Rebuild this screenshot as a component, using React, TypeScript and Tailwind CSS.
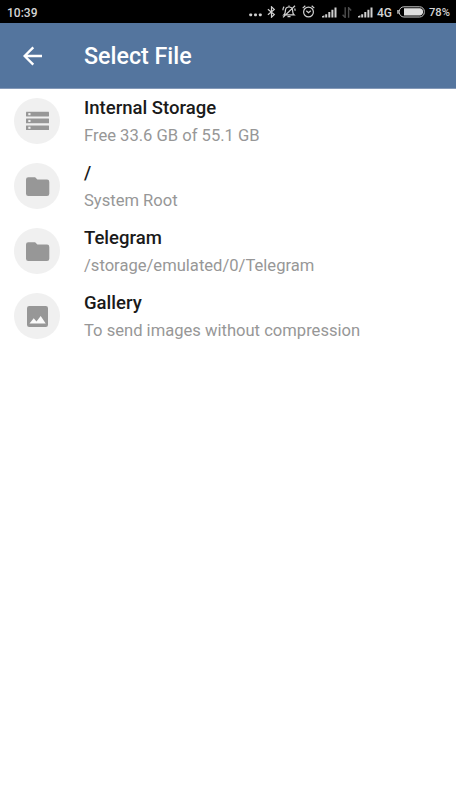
import type { ReactNode } from "react";

const StorageIcon = () => (
  <svg width="46" height="46" viewBox="0 0 46 46" fill="#979797">
    {[13.8, 20.6, 27.4].map((y) => (
      <g key={y}>
        <rect x="12" y={y} width="23" height="4.7" rx="0.4" />
        <rect x="14.3" y={y + 1.3} width="2.2" height="2.1" fill="#f0f0f0" />
      </g>
    ))}
  </svg>
);

const FolderIcon = () => (
  <svg width="46" height="46" viewBox="0 0 46 46" fill="#979797">
    <path d="M14.3 14.2h6.8l2.3 2.4h9.6a2.3 2.3 0 0 1 2.3 2.3v11.8a2.3 2.3 0 0 1-2.3 2.3H14.3a2.3 2.3 0 0 1-2.3-2.3V16.5a2.3 2.3 0 0 1 2.3-2.3z" />
  </svg>
);

const GalleryIcon = () => (
  <svg width="46" height="46" viewBox="0 0 46 46">
    <rect x="13" y="13" width="21" height="21" rx="2.2" fill="#979797" />
    <path d="M15.5 30.5l4.2-5.2 2.8 3.1 4.2-5.4 5 7.5z" fill="#fafafa" />
  </svg>
);

const Signal = () => (
  <svg width="15" height="11" viewBox="0 0 15 11" fill="#d0d0d0" className="mt-[2px]">
    <path d="M0 10.5V9.2l2.4-1v2.3zM3.2 7.2h2v3.3h-2zM6.3 5h2v5.5h-2zM9.4 2.8h2v7.7h-2zM12.5.6h2v9.9h-2z" />
  </svg>
);

const Bluetooth = () => (
  <svg width="9" height="12" viewBox="0 0 9 12" fill="none" stroke="#d0d0d0" strokeWidth="1.2">
    <path d="M.9 3.2l6.4 5.4-2.8 2.6V.8l2.8 2.6L.9 8.8" />
  </svg>
);

const MutedBell = () => (
  <svg width="14" height="13" viewBox="0 0 14 13" fill="none" stroke="#d0d0d0" strokeWidth="1.2">
    <path d="M2 9.8c1.3-1 1.3-2.3 1.4-4.2C3.5 3.2 5 2 7 2s3.5 1.2 3.6 3.6c.1 1.9.1 3.2 1.4 4.2zM5.5 11.6h3M7 .6V2M13 .7L1 12.4" />
    <path d="M.9 5.2c0-1.400.4-2.500 1.200-3.500M13.100 5.800c0-.8-.1-1.600-.4-2.300" />
  </svg>
);

const Alarm = () => (
  <svg width="13" height="13" viewBox="0 0 13 13" fill="none" stroke="#d0d0d0" strokeWidth="1.2">
    <circle cx="6.5" cy="7" r="4.9" />
    <path d="M4.3 5.7l2.2 2 2.3-2M.7 3.1L3.3.8M12.3 3.1L9.7.8" />
  </svg>
);

const StatusBar = () => (
  <div className="flex h-[23px] items-center bg-black px-[7px] font-medium text-[#d4d4d4]">
    <span className="mt-[2px] text-[12px] leading-none">10:39</span>
    <div className="ml-auto flex items-center">
      <svg width="13" height="4" viewBox="0 0 13 4" fill="#d0d0d0" className="mt-[6px] mr-[5px]">
        <rect x="0.3" y="0.4" width="2.8" height="2.8" rx=".9" />
        <rect x="5.1" y="0.4" width="2.8" height="2.8" rx=".9" />
        <rect x="9.9" y="0.4" width="2.8" height="2.8" rx=".9" />
      </svg>
      <Bluetooth />
      <span className="w-[6px]" />
      <MutedBell />
      <span className="w-[6px]" />
      <Alarm />
      <span className="w-[7px]" />
      <Signal />
      <svg width="10" height="11" viewBox="0 0 10 11" fill="none" stroke="#4d4d4d" strokeWidth="1.4" className="mt-px mr-[6px] ml-[5px]">
        <path d="M3.2.3v10.2L.6 7.7M6.6 10.7V.7l2.6 2.8" />
      </svg>
      <Signal />
      <span className="mt-[2px] ml-[4px] w-[20px] text-[12px] leading-none">4G</span>
      <svg width="28" height="12" viewBox="0 0 28 12" fill="none" className="mt-px">
        <rect x="2.3" y=".8" width="25" height="10.2" rx="4.6" stroke="#c8c8c8" />
        <path d="M1 4v3.8" stroke="#c8c8c8" strokeWidth="1.5" />
        <path d="M7 2.3h15.8a3.4 3.4 0 0 1 3.200 3.200v.8a3.400 3.400 0 0 1-3.200 3.200H7z" fill="#dedede" />
      </svg>
      <span className="mt-[2px] ml-[4px] w-[20px] text-[11.2px] leading-none whitespace-nowrap">78%</span>
    </div>
  </div>
);

const Header = () => (
  <header className="flex h-[66px] items-center border-b border-[#8499b8] bg-[#54759e] pl-[23px] text-white">
    <svg width="20" height="20" viewBox="0 0 20 20" fill="none" stroke="#fff" strokeWidth="2.4">
      <path d="M19 10H1.8M10.3 1.3L1.6 10l8.7 8.7" />
    </svg>
    <h1 className="mt-[2px] ml-[41px] text-[23.25px] leading-none font-medium">Select File</h1>
  </header>
);

type Entry = { title: string; detail: string; icon: ReactNode };

const entries: Entry[] = [
  { title: "Internal Storage", detail: "Free 33.6 GB of 55.1 GB", icon: <StorageIcon /> },
  { title: "/", detail: "System Root", icon: <FolderIcon /> },
  { title: "Telegram", detail: "/storage/emulated/0/Telegram", icon: <FolderIcon /> },
  { title: "Gallery", detail: "To send images without compression", icon: <GalleryIcon /> },
];

const Row = ({ title, detail, icon }: Entry) => (
  <li className="flex h-[65px] items-start pl-[14px]">
    <div className="mt-[9px] h-[46px] w-[46px] shrink-0 rounded-full bg-[#f0f0f0]">{icon}</div>
    <div className="mt-[6px] ml-[24px] whitespace-nowrap">
      <p className="text-[18.55px] leading-[27px] font-medium text-[#1a1a1a]">{title}</p>
      <p className="text-[16.58px] leading-[27px] text-[#979797]">{detail}</p>
    </div>
  </li>
);

export default function App() {
  return (
    <div className="min-h-[811px] w-full overflow-hidden bg-white font-[Roboto,sans-serif]">
      <StatusBar />
      <Header />
      <ul>
        {entries.map((entry) => (
          <Row key={entry.title} {...entry} />
        ))}
      </ul>
    </div>
  );
}
